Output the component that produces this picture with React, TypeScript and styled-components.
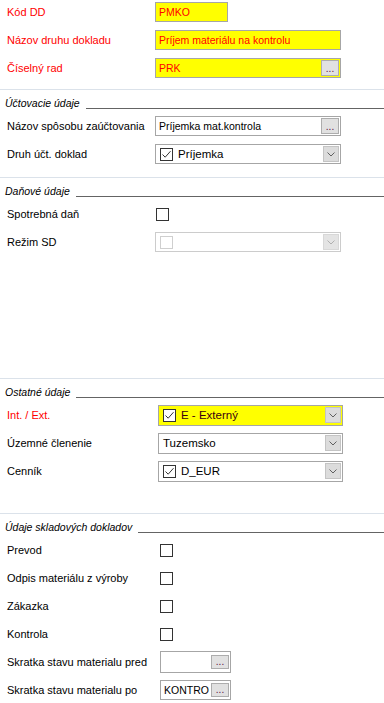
import React from 'react';
import styled, { createGlobalStyle } from 'styled-components';

const GlobalStyle = createGlobalStyle`
  html, body {
    margin: 0;
    padding: 0;
    background: #fff;
  }
  body {
    font-family: "Liberation Sans", Arial, sans-serif;
    font-size: 11px;
    color: #000;
  }
`;

const Page = styled.div`
  width: 384px;
  height: 703px;
  overflow: hidden;
  background: #fff;
`;

const Section = styled.section<{ $height?: number; $separator?: boolean }>`
  box-sizing: border-box;
  height: ${(p) => (p.$height ? `${p.$height}px` : 'auto')};
  border-top: ${(p) => (p.$separator ? '1px solid #dbe2ea' : 'none')};
`;

const GroupTitle = styled.div`
  display: flex;
  align-items: flex-start;
  box-sizing: border-box;
  height: 22px;
  padding: 7px 0 0 5px;
  font-style: italic;
  font-size: 10.5px;
  line-height: 13px;
`;

const TitleLine = styled.span`
  flex: 1;
  height: 1px;
  margin: 11px 0 0 6px;
  background: #646464;
`;

const Rows = styled.div<{ $shift?: number }>`
  margin-top: ${(p) => p.$shift || 0}px;
`;

const Row = styled.div`
  display: flex;
  align-items: center;
  height: 28px;
  padding-left: 7px;
`;

const Label = styled.div<{ $width: number; $required?: boolean }>`
  flex: none;
  width: ${(p) => p.$width}px;
  color: ${(p) => (p.$required ? '#ff0000' : '#000')};
  white-space: nowrap;
`;

const Field = styled.div<{ $width: number; $height?: number; $yellow?: boolean }>`
  display: flex;
  align-items: center;
  box-sizing: border-box;
  width: ${(p) => p.$width}px;
  height: ${(p) => p.$height || 20}px;
  padding: 0 1px 0 3px;
  border: 1px solid #a6a6a6;
  background: ${(p) => (p.$yellow ? '#ffff00' : '#fff')};
  color: ${(p) => (p.$yellow ? '#ff0000' : '#000')};
  font-size: 10.5px;
  white-space: nowrap;
  overflow: hidden;
`;

const FieldText = styled.span`
  flex: 1;
  overflow: hidden;
`;

const DotsButton = styled.div<{ $height?: number }>`
  flex: none;
  display: flex;
  align-items: flex-end;
  justify-content: center;
  box-sizing: border-box;
  width: 18px;
  height: ${(p) => p.$height || 16}px;
  border: 1px solid #adadad;
  background: #e1e1e1;
  color: #5a1040;
  font-size: 10px;
  line-height: 12px;
`;

const Combo = styled.div<{ $width: number; $height?: number; $yellow?: boolean; $disabled?: boolean }>`
  display: flex;
  align-items: center;
  box-sizing: border-box;
  width: ${(p) => p.$width}px;
  height: ${(p) => p.$height || 20}px;
  padding: 0 1px 0 4px;
  border: 1px solid ${(p) => (p.$disabled ? '#cccccc' : '#a6a6a6')};
  background: ${(p) => (p.$yellow ? '#ffff00' : '#fff')};
  color: ${(p) => (p.$yellow ? '#3a0010' : '#000')};
  white-space: nowrap;
`;

const ComboText = styled.span`
  flex: 1;
  font-size: 11.5px;
`;

const DropButton = styled.div<{ $disabled?: boolean }>`
  flex: none;
  display: flex;
  align-items: center;
  justify-content: center;
  box-sizing: border-box;
  width: 16px;
  height: 16px;
  border: 1px solid ${(p) => (p.$disabled ? '#d8d8d8' : '#c4c4c4')};
  background: ${(p) => (p.$disabled ? '#e4e4e4' : '#dcdcdc')};
`;

const Box = styled.div<{ $disabled?: boolean; $gap?: number; $offset?: number }>`
  flex: none;
  display: flex;
  align-items: center;
  justify-content: center;
  box-sizing: border-box;
  width: 13px;
  height: 13px;
  margin-left: ${(p) => p.$offset || 0}px;
  margin-right: ${(p) => p.$gap || 0}px;
  border: 1px solid ${(p) => (p.$disabled ? '#cfcfcf' : '#333')};
  background: #fff;
`;

const Chevron = ({ disabled }: { disabled?: boolean }) => (
  <svg width="8" height="5" viewBox="0 0 8 5">
    <path d="M0.5 0.5 L4 4 L7.5 0.5" fill="none" stroke={disabled ? '#b0b0b0' : '#606060'} strokeWidth="1" />
  </svg>
);

const Check = () => (
  <svg width="11" height="11" viewBox="0 0 11 11">
    <path d="M1.5 5.5 L4.2 8.2 L9.5 2.2" fill="none" stroke="#333" strokeWidth="1" />
  </svg>
);

type ComboProps = {
  width: number;
  height?: number;
  text?: string;
  checked?: boolean;
  yellow?: boolean;
  disabled?: boolean;
};

const ComboBox = (props: ComboProps) => (
  <Combo $width={props.width} $height={props.height} $yellow={props.yellow} $disabled={props.disabled}>
    {(props.checked || props.disabled) && (
      <Box $disabled={props.disabled} $gap={props.text ? 5 : 0}>
        {props.checked && <Check />}
      </Box>
    )}
    <ComboText>{props.text}</ComboText>
    <DropButton $disabled={props.disabled}>
      <Chevron disabled={props.disabled} />
    </DropButton>
  </Combo>
);

const Title = ({ children }: { children: React.ReactNode }) => (
  <GroupTitle>
    {children}
    <TitleLine />
  </GroupTitle>
);

export default function App() {
  return (
    <Page>
      <GlobalStyle />
      <Section $height={91}>
        <Rows $shift={-2}>
          <Row>
            <Label $width={148} $required>Kód DD</Label>
            <Field $width={73} $yellow><FieldText>PMKO</FieldText></Field>
          </Row>
          <Row>
            <Label $width={148} $required>Názov druhu dokladu</Label>
            <Field $width={186} $yellow><FieldText>Príjem materiálu na kontrolu</FieldText></Field>
          </Row>
          <Row>
            <Label $width={148} $required>Číselný rad</Label>
            <Field $width={186} $yellow>
              <FieldText>PRK</FieldText>
              <DotsButton>...</DotsButton>
            </Field>
          </Row>
        </Rows>
      </Section>

      <Section $height={88} $separator>
        <Title>Účtovacie údaje</Title>
        <Rows>
          <Row>
            <Label $width={148}>Názov spôsobu zaúčtovania</Label>
            <Field $width={186}>
              <FieldText>Príjemka mat.kontrola</FieldText>
              <DotsButton>...</DotsButton>
            </Field>
          </Row>
          <Row>
            <Label $width={148}>Druh účt. doklad</Label>
            <ComboBox width={186} text="Príjemka" checked />
          </Row>
        </Rows>
      </Section>

      <Section $height={201} $separator>
        <Title>Daňové údaje</Title>
        <Rows>
          <Row>
            <Label $width={148}>Spotrebná daň</Label>
            <Box $offset={1} />
          </Row>
          <Row>
            <Label $width={148}>Režim SD</Label>
            <ComboBox width={186} disabled />
          </Row>
        </Rows>
      </Section>

      <Section $height={135} $separator>
        <Title>Ostatné údaje</Title>
        <Rows>
          <Row>
            <Label $width={151} $required>Int. / Ext.</Label>
            <ComboBox width={185} height={21} text="E - Externý" checked yellow />
          </Row>
          <Row>
            <Label $width={151}>Územné členenie</Label>
            <ComboBox width={185} height={21} text="Tuzemsko" />
          </Row>
          <Row>
            <Label $width={151}>Cenník</Label>
            <ComboBox width={185} height={21} text="D_EUR" checked />
          </Row>
        </Rows>
      </Section>

      <Section $separator>
        <Title>Údaje skladových dokladov</Title>
        <Rows>
          <Row>
            <Label $width={153}>Prevod</Label>
            <Box />
          </Row>
          <Row>
            <Label $width={153}>Odpis materiálu z výroby</Label>
            <Box />
          </Row>
          <Row>
            <Label $width={153}>Zákazka</Label>
            <Box />
          </Row>
          <Row>
            <Label $width={153}>Kontrola</Label>
            <Box />
          </Row>
          <Row>
            <Label $width={153}>Skratka stavu materialu pred</Label>
            <Field $width={71} $height={22}>
              <FieldText />
              <DotsButton $height={14}>...</DotsButton>
            </Field>
          </Row>
          <Row>
            <Label $width={153}>Skratka stavu materialu po</Label>
            <Field $width={71} $height={20}>
              <FieldText>KONTRO</FieldText>
              <DotsButton $height={14}>...</DotsButton>
            </Field>
          </Row>
        </Rows>
      </Section>
    </Page>
  );
}
